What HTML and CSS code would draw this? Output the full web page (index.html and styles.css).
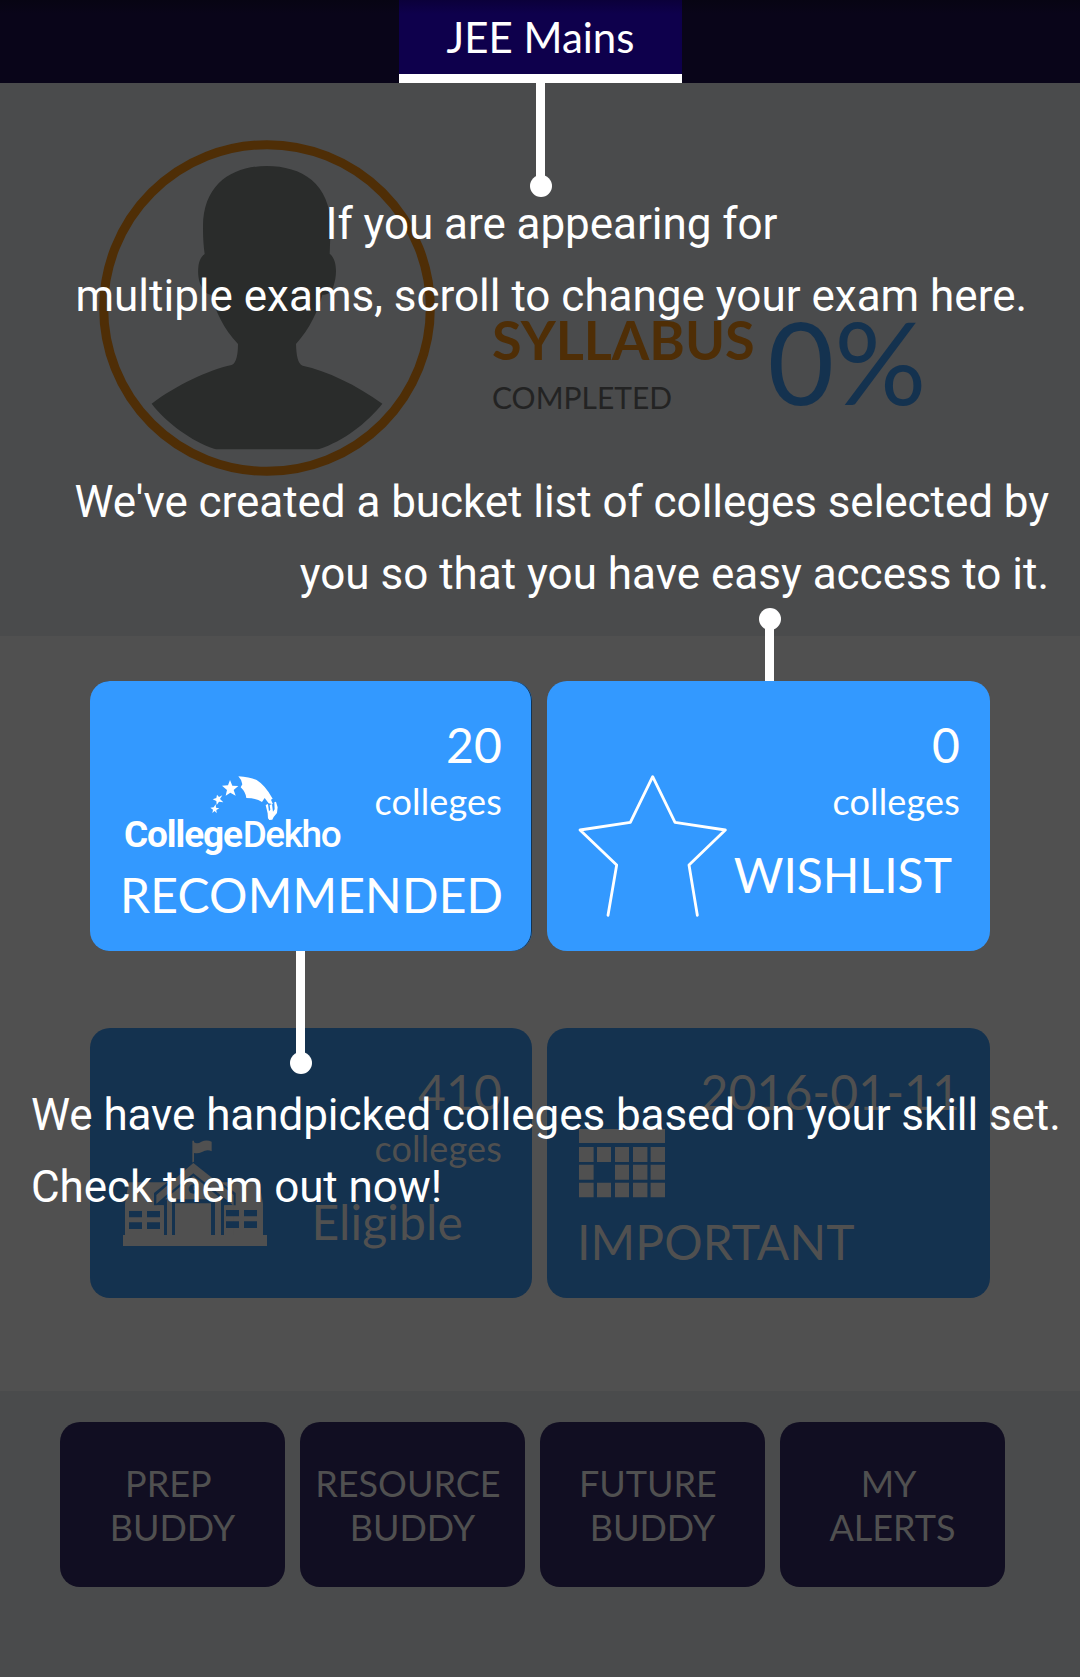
FILE: index.html
```html
<!DOCTYPE html>
<html lang="en">
<head>
<meta charset="utf-8">
<title>JEE Mains</title>
<link rel="stylesheet" href="styles.css">
</head>
<body>
<div class="app">
  <header class="topbar"><div class="tab">JEE Mains</div></header>

  <section class="hero">
    <svg class="avatar" viewBox="57 60 1008 1008">
      <circle cx="561" cy="564" r="490" fill="none" stroke="#4f2e06" stroke-width="27"/>
      <path fill="#2a2c2b" d="M560 138C665 138 752 190 752 320L749 401C772 420 772 465 760 500C752 521 740 524 727 524C715 570 690 625 648 672C649 705 653 732 668 737C740 752 830 795 907 851C860 910 790 963 718 987Q712 988 706 988H416Q408 988 402 986C335 963 260 910 215 851C290 795 385 750 455 735C470 730 474 700 474 672C430 625 405 570 394 524C375 525 350 490 355 442C357 420 365 408 374 402C370 370 369 350 369 320C369 190 460 138 560 138Z"/>
    </svg>
    <div class="syllabus">
      <div class="syllabus-title">SYLLABUS</div>
      <div class="syllabus-sub">COMPLETED</div>
    </div>
    <div class="percent">0%</div>
  </section>

  <main class="cards">
    <article class="card lit edge">
      <div class="card-row">
        <svg class="logo" viewBox="132 312 654 250">
          <g fill="#fff">
            <path d="M475 319Q510 322 530 330Q556 346 578 386L573 389L579 403L566 400L554 384L546 396Q528 384 499 384Q497 366 482 352L487 343Q485 329 475 319Z"/>
            <path d="M557 405L564 402L567 424L571 419L569 405L576 402L579 425L584 418L583 397L588 395L593 412L591 429L581 441L577 449L568 450L564 445L563 430Z"/>
            <path d="M450 330L457 347L475 348L461 360L467 377L451 368L437 377L441 360L426 347L444 346Z"/>
            <path d="M427 376L420 387L430 397L417 395L410 405L409 393L398 388L409 384L411 374L417 381Z"/>
            <path d="M407 403L408 413L418 415L409 420L410 430L404 423L397 429L399 419L391 413L401 412Z"/>
            <text class="logo-bold" x="132" y="530" textLength="357">College</text>
            <text class="logo-thin" x="488" y="530" textLength="297">Dekho</text>
          </g>
        </svg>
        <div class="stats"><div class="num">20</div><div class="unit">colleges</div></div>
      </div>
      <div class="title wide">RECOMMENDED</div>
    </article>

    <article class="card lit">
      <div class="card-row">
        <svg class="star" viewBox="112 312 452 432">
          <path fill="none" stroke="#fff" stroke-width="8.5" stroke-linecap="round" stroke-linejoin="round" d="M202 736L228 585L118 480L269 457L336 320L403 457L554 480L445 585L470 736"/>
        </svg>
        <div class="stats"><div class="num">0</div><div class="unit">colleges</div><div class="title wish">WISHLIST</div></div>
      </div>
    </article>

    <article class="card dim">
      <div class="card-row">
        <svg class="school" viewBox="129 599 432 320">
          <g fill="#505050">
            <path d="M337 601H342V606Q352 612 364 604Q380 597 395 604V633Q382 626 366 635Q354 641 342 638V672H337Z"/>
            <path d="M129 884H135V790L146 726H538L549 790V884H561V917H129Z"/>
          </g>
          <path fill="#14324f" d="M340 664L222 758V795H250V884H434V795H467V758Z"/>
          <path fill="#505050" d="M340 668L461 764V796L434 774L340 699L255 768L229 790V764Z"/>
          <path fill="#505050" d="M340 707L425 777H255Z"/>
          <path fill="#505050" d="M230 795H252V884H230ZM432 795H461V884H432ZM261 777H276V884H261ZM285 789H393V884H285ZM405 777H423V884H405Z"/>
          <circle cx="340" cy="746" r="14" fill="#14324f"/>
          <path fill="#505050" d="M340 736H344V746H352V750H340Z"/>
          <path fill="#14324f" d="M147 812h39v19h-39zM201 812h39v19h-39zM147 846h39v20h-39zM201 846h39v20h-39zM438 809h39v19h-39zM492 809h39v19h-39zM438 843h39v20h-39zM492 843h39v20h-39z"/>
        </svg>
        <div class="stats"><div class="num">410</div><div class="unit">colleges</div><div class="title eligible">Eligible</div></div>
      </div>
    </article>

    <article class="card dim stack">
      <div class="num date">2016-01-11</div>
      <svg class="calendar" viewBox="0 0 86 68">
        <path fill="#505050" d="M0 0h86v14H0zM0 18h14.6v15H0zM18 18h14v15H18zM36 18h14v15H36zM54 18h14.4v15H54zM71.6 18H86v15H71.6zM0 35.7h14.6v15H0zM36 35.7h14v15H36zM54 35.7h14.4v15H54zM71.6 35.7H86v15H71.6zM0 53.7h14.6v14.6H0zM18 53.7h14v14.6H18zM36 53.7h14v14.6H36zM54 53.7h14.4v14.6H54zM71.6 53.7H86v14.6H71.6z"/>
      </svg>
      <div class="title important">IMPORTANT</div>
    </article>
  </main>

  <footer class="buddies">
    <div class="buddy">PREP&nbsp;<br>BUDDY</div>
    <div class="buddy">RESOURCE&nbsp;<br>BUDDY</div>
    <div class="buddy">FUTURE&nbsp;<br>BUDDY</div>
    <div class="buddy">MY&nbsp;<br>ALERTS</div>
  </footer>

  <div class="pin pin-exam"></div>
  <p class="hint hint-exam"><span class="indent">If you are appearing for</span><br>multiple exams, scroll to change your exam here.</p>
  <div class="pin pin-wish"></div>
  <p class="hint hint-wish"><span class="snug">We've created a bucket list of colleges selected by</span><br>you so that you have easy access to it.</p>
  <div class="pin pin-rec"></div>
  <p class="hint hint-rec">We have handpicked colleges based on your skill set.<br>Check them out now!</p>
</div>
</body>
</html>
```
FILE: styles.css
```css
* { box-sizing: border-box; }

body {
  margin: 0;
  font-family: Lato, sans-serif;
  background: #4a4b4c;
}

svg { display: block; flex: none; }

.app {
  position: relative;
  width: 1080px;
  height: 1677px;
  overflow: hidden;
  display: flex;
  flex-direction: column;
}

/* header */
.topbar {
  height: 83px;
  display: flex;
  justify-content: center;
  padding-left: 1px;
  background: linear-gradient(#070513, #090519 14px);
}
.tab {
  width: 283px;
  height: 83px;
  border-bottom: 9px solid #fff;
  background: linear-gradient(#0b003a, #0e004c 14px);
  color: #fff;
  font-size: 42px;
  line-height: 74px;
  text-align: center;
}

/* profile and progress */
.hero {
  height: 553px;
  display: flex;
  align-items: flex-start;
  padding: 57px 0 0 99px;
}
.avatar { width: 336px; height: 336px; }
.syllabus { margin: 167px 0 0 57px; }
.syllabus-title {
  font-size: 54px;
  font-weight: bold;
  line-height: 65px;
  color: #4f2e06;
}
.syllabus-sub {
  margin-top: 7px;
  font-size: 30px;
  line-height: 36px;
  color: #232323;
}
.percent {
  margin: 151px 0 0 13px;
  font-size: 115px;
  line-height: 138px;
  color: #14324f;
}

/* cards */
.cards {
  height: 755px;
  padding: 45px 90px 0;
  background: #505050;
  display: grid;
  grid-template-columns: 442px 443px;
  grid-auto-rows: 270px;
  gap: 77px 15px;
  align-content: start;
}
.card {
  border-radius: 20px;
  padding: 35px 29px 0;
}
.lit { background: #3399ff; color: #fff; }
.dim { background: #14324f; color: #505050; }
.edge { box-shadow: inset -1px 0 #14324f; }

.card-row {
  display: flex;
  justify-content: space-between;
  align-items: flex-start;
}
.stats { text-align: right; }
.num {
  margin-right: 1px;
  font-size: 48px;
  line-height: 58px;
  letter-spacing: 0.2px;
}
.unit {
  margin: 5px 1px 0 0;
  font-size: 36px;
  line-height: 44px;
  letter-spacing: 0.15px;
}
.title {
  font-size: 48px;
  line-height: 58px;
  white-space: nowrap;
}
.wide { margin-top: 9px; padding-left: 1px; letter-spacing: 0.2px; }
.wish { margin: 23px 9px 0 0; }
.eligible { margin: 23px 40px 0 0; letter-spacing: 0.15px; }

.logo { width: 218px; height: 83.3px; margin: 58px 0 0 5px; }
.logo-bold { font: bold 111px Roboto, sans-serif; }
.logo-thin { font: 500 111px Roboto, sans-serif; }
.star { width: 150.7px; height: 144px; margin: 58px 0 0 1.6px; }
.school { width: 144px; height: 106.7px; margin: 76.7px 0 0 4px; }

.stack { display: flex; flex-direction: column; }
.date { text-align: right; letter-spacing: 0.1px; }
.calendar { width: 86px; height: 68px; margin: 8px 0 0 3px; overflow: visible; }
.important { margin-top: 16px; padding-left: 1px; letter-spacing: 0.1px; }

/* bottom buttons */
.buddies {
  flex: 1;
  display: grid;
  grid-template-columns: repeat(4, 225px);
  grid-auto-rows: 165px;
  column-gap: 15px;
  padding: 31px 0 0 60px;
}
.buddy {
  border-radius: 20px;
  background: #110e22;
  color: #505050;
  padding-top: 39px;
  font-size: 36px;
  line-height: 44px;
  text-align: center;
}

/* coach marks laid over the page */
.hint {
  position: absolute;
  margin: 0;
  font: 44px/72px Roboto, sans-serif;
  color: #fff;
  white-space: nowrap;
}
.indent { padding-left: 250px; letter-spacing: -0.05px; }
.snug { letter-spacing: -0.05px; }
.hint-exam { left: 75.5px; top: 188px; }
.hint-wish { right: 31px; top: 466px; text-align: right; }
.hint-rec { left: 31px; top: 1079px; letter-spacing: -0.07px; }

.pin {
  position: absolute;
  width: 9px;
  background: #fff;
}
.pin::after {
  content: "";
  position: absolute;
  left: -6px;
  width: 22px;
  height: 22px;
  border-radius: 50%;
  background: #fff;
}
.pin-exam { left: 536px; top: 83px; height: 103px; }
.pin-wish { left: 765px; top: 619px; height: 62px; }
.pin-rec { left: 296px; top: 951px; height: 112px; }
.pin-exam::after, .pin-rec::after { bottom: -11px; }
.pin-wish::after { top: -11px; }
```
